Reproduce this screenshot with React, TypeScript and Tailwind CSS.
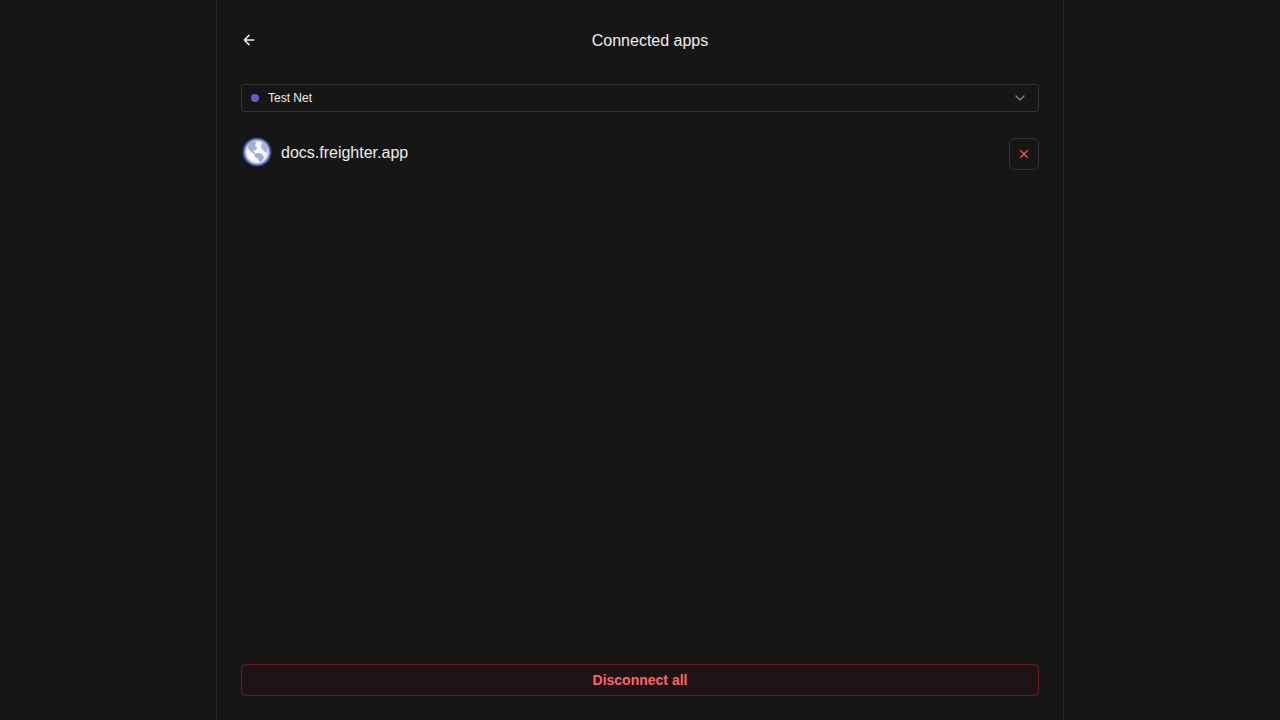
import React from "react";

function GlobeIcon() {
  return (
    <svg width="32" height="32" viewBox="0 0 32 32" aria-hidden="true">
      <defs>
        <radialGradient id="globe">
          <stop offset="0" stopColor="#ffffff" />
          <stop offset="0.66" stopColor="#f7f8ff" />
          <stop offset="0.78" stopColor="#c3caf0" />
          <stop offset="0.87" stopColor="#6974b8" />
          <stop offset="1" stopColor="#2b3166" />
        </radialGradient>
        <filter id="soft">
          <feGaussianBlur stdDeviation="0.65" />
        </filter>
      </defs>
      <g filter="url(#soft)">
        <circle cx="16" cy="16" r="14.6" fill="url(#globe)" />
        <path
          d="M8 7 12.5 5 15.5 6.5 14 9.5 16.5 12 14 14.5 12 14.5 14.5 17.5 12.5 17.5 8.5 14.5 6.5 11Z"
          fill="#a3b1d6"
        />
        <path d="M21.5 6 25 9 26.5 12.5 26 17 23.5 15.5 20.5 12.5 20 9.5Z" fill="#a9b5da" />
        <path d="M13.5 17.5 18 17 22 19 23 21.5 21 25 18.5 26 17 22.5 13.5 20.5Z" fill="#9caad0" />
      </g>
    </svg>
  );
}

export default function App() {
  return (
    <div className="flex h-screen justify-center overflow-hidden bg-[#161616] font-['Liberation_Sans',Arial,sans-serif] text-[#ededed]">
      <main className="flex w-[848px] flex-col border-x border-[#2a2a2a] px-6 pb-6">
        <header className="grid h-20 grid-cols-[20px_1fr] items-center">
          <button aria-label="Back" className="flex h-4 w-4 items-center justify-center">
            <svg
              width="16"
              height="16"
              viewBox="0 0 24 24"
              fill="none"
              stroke="currentColor"
              strokeWidth="2.3"
              strokeLinecap="round"
              strokeLinejoin="round"
            >
              <path d="M19 12H5M12 19l-7-7 7-7" />
            </svg>
          </button>
          <h1 className="pt-0.5 text-center text-base leading-6">Connected apps</h1>
        </header>
        <button className="mt-1 flex h-7 shrink-0 items-center rounded-[4px] border border-[#343434] pr-3 pl-[9px] text-xs">
          <span className="mr-[9px] h-2 w-2 rounded-full bg-[#6e56cf]" />
          <span>Test Net</span>
          <svg
            className="ml-auto text-[#7e7e7e]"
            width="12"
            height="12"
            viewBox="0 0 12 12"
            fill="none"
            stroke="currentColor"
            strokeWidth="1.5"
            strokeLinecap="round"
            strokeLinejoin="round"
          >
            <path d="m2 4 4 4 4-4" />
          </svg>
        </button>
        <section className="mt-6 flex h-9 items-start">
          <GlobeIcon />
          <span className="mt-[5px] ml-2 text-base leading-6">docs.freighter.app</span>
          <button
            aria-label="Disconnect docs.freighter.app"
            className="mt-0.5 ml-auto flex h-8 w-[30px] items-center justify-center rounded-md border border-[#343434] text-[#e5484d]"
          >
            <svg
              width="14"
              height="14"
              viewBox="0 0 24 24"
              fill="none"
              stroke="currentColor"
              strokeWidth="2.8"
              strokeLinecap="butt"
            >
              <path d="M18.5 5.5 5.5 18.5M5.5 5.5l13 13" />
            </svg>
          </button>
        </section>
        <button className="mt-auto flex h-8 shrink-0 items-center justify-center rounded-md border border-[#671e22] bg-[#1f1315] text-sm font-bold text-[#ff6369]">
          Disconnect all
        </button>
      </main>
    </div>
  );
}
